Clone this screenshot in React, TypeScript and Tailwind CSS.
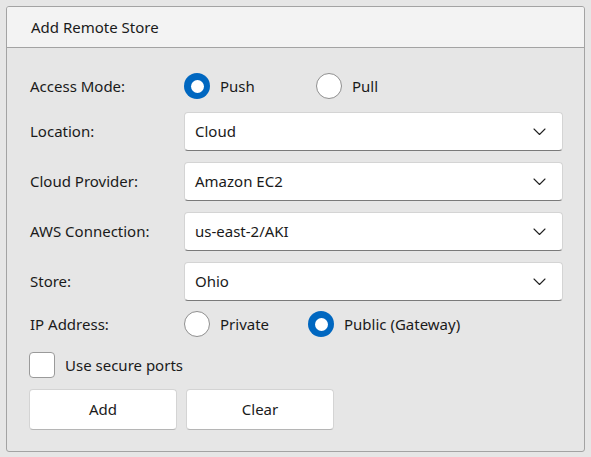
import React from "react";

const Chevron = () => (
  <svg width="13" height="8" viewBox="0 0 13 8" fill="none">
    <path d="M1 1l5.5 5.5L12 1" stroke="#222" strokeWidth="1.1" strokeLinecap="round" strokeLinejoin="round" />
  </svg>
);

const Radio = ({ checked, label, className = "" }: { checked: boolean; label: string; className?: string }) => (
  <div className={"flex items-center " + className}>
    {checked ? (
      <div className="w-[26px] h-[26px] rounded-full bg-[#0067c0] flex items-center justify-center">
        <div className="w-[13px] h-[13px] rounded-full bg-white" />
      </div>
    ) : (
      <div className="w-[26px] h-[26px] rounded-full bg-white border border-[#8f8f8f]" />
    )}
    <span className="ml-[10px]">{label}</span>
  </div>
);

const Select = ({ value }: { value: string }) => (
  <div className="h-[39px] bg-white rounded-[4px] border border-[#d4d4d4] border-b-[#7a7a7a] flex items-center justify-between pl-[10px] pr-[16px]">
    <span>{value}</span>
    <Chevron />
  </div>
);

const Row = ({ label, children, className = "" }: { label: string; children: React.ReactNode; className?: string }) => (
  <div className={"flex items-center " + className}>
    <div className="w-[154px] shrink-0">{label}</div>
    <div className="flex-1">{children}</div>
  </div>
);

export default function App() {
  return (
    <div
      className="w-[591px] h-[457px] bg-[#e6e6e6] p-[6px] text-[#1a1a1a] text-[15px]"
      style={{ fontFamily: '"Noto Sans", "Open Sans", sans-serif' }}
    >
      <div className="h-[446px] border border-[#a3a3a3] rounded-[3px] bg-[#e6e6e6] flex flex-col overflow-hidden">
        <div className="h-[41px] shrink-0 bg-[#f3f3f3] border-b border-[#a3a3a3] flex items-center pl-[24px] pt-[1px]">
          Add Remote Store
        </div>
        <div className="flex flex-col pl-[23px] pr-[21px] pt-[25px]">
          <Row label="Access Mode:" className="h-[26px]">
            <div className="flex items-center">
              <Radio checked label="Push" className="w-[132px]" />
              <Radio checked={false} label="Pull" />
            </div>
          </Row>
          <Row label="Location:" className="mt-[13px]">
            <Select value="Cloud" />
          </Row>
          <Row label="Cloud Provider:" className="mt-[11px]">
            <Select value="Amazon EC2" />
          </Row>
          <Row label="AWS Connection:" className="mt-[11px]">
            <Select value="us-east-2/AKI" />
          </Row>
          <Row label="Store:" className="mt-[11px]">
            <Select value="Ohio" />
          </Row>
          <Row label="IP Address:" className="mt-[10px] h-[26px]">
            <div className="flex items-center">
              <Radio checked={false} label="Private" className="w-[124px]" />
              <Radio checked label="Public (Gateway)" />
            </div>
          </Row>
          <div className="mt-[15px] h-[26px] flex items-center">
            <div className="w-[26px] h-[26px] bg-white border border-[#9a9a9a] rounded-[4px] -ml-[1px]" />
            <span className="ml-[10px]">Use secure ports</span>
          </div>
          <div className="mt-[11px] flex gap-[9px] -ml-[1px]">
            <button className="w-[148px] h-[41px] bg-white border border-[#d4d4d4] border-b-[#b5b5b5] rounded-[4px]">Add</button>
            <button className="w-[148px] h-[41px] bg-white border border-[#d4d4d4] border-b-[#b5b5b5] rounded-[4px]">Clear</button>
          </div>
        </div>
      </div>
    </div>
  );
}
